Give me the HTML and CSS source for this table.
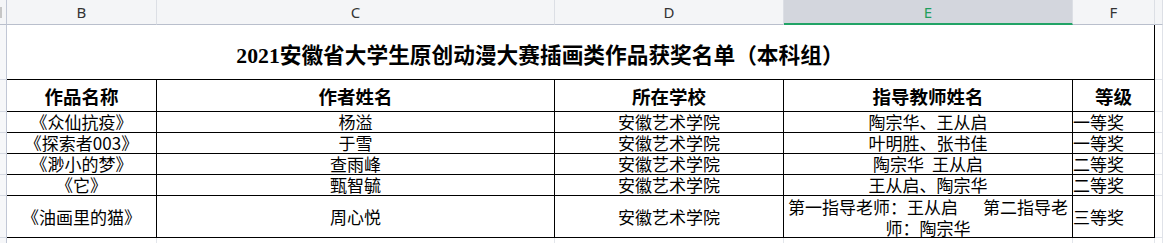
FILE: index.html
```html
<!DOCTYPE html>
<html lang="zh-CN">
<head>
<meta charset="utf-8">
<title>获奖名单</title>
<link rel="stylesheet" href="styles.css">
</head>
<body>
<div class="sheet">
  <div class="colhead corner"><span class="nub"></span></div>
  <div class="colhead">B</div>
  <div class="colhead">C</div>
  <div class="colhead">D</div>
  <div class="colhead active">E</div>
  <div class="colhead">F</div>
  <div class="colhead"></div>

  <div class="rowhead"></div>
  <div class="title">2021安徽省大学生原创动漫大赛插画类作品获奖名单（本科组）</div>
  <div class="title-end"></div>
  <div class="pad"></div>

  <div class="rowhead"></div>
  <div class="cell head">作品名称</div>
  <div class="cell head">作者姓名</div>
  <div class="cell head">所在学校</div>
  <div class="cell head">指导教师姓名</div>
  <div class="cell head">等级</div>
  <div class="pad"></div>

  <div class="rowhead"></div>
  <div class="cell">《众仙抗疫》</div>
  <div class="cell">杨溢</div>
  <div class="cell">安徽艺术学院</div>
  <div class="cell">陶宗华、王从启</div>
  <div class="cell left">一等奖</div>
  <div class="pad"></div>

  <div class="rowhead"></div>
  <div class="cell">《探索者003》</div>
  <div class="cell">于雪</div>
  <div class="cell">安徽艺术学院</div>
  <div class="cell">叶明胜、张书佳</div>
  <div class="cell left">一等奖</div>
  <div class="pad"></div>

  <div class="rowhead"></div>
  <div class="cell">《渺小的梦》</div>
  <div class="cell">查雨峰</div>
  <div class="cell">安徽艺术学院</div>
  <div class="cell">陶宗华<span class="sp"></span>王从启</div>
  <div class="cell left">二等奖</div>
  <div class="pad"></div>

  <div class="rowhead"></div>
  <div class="cell">《它》</div>
  <div class="cell">甄智毓</div>
  <div class="cell">安徽艺术学院</div>
  <div class="cell">王从启、陶宗华</div>
  <div class="cell left">二等奖</div>
  <div class="pad"></div>

  <div class="rowhead"></div>
  <div class="cell">《油画里的猫》</div>
  <div class="cell">周心悦</div>
  <div class="cell">安徽艺术学院</div>
  <div class="cell wrap"><p class="lines">第一指导老师：王从启<span class="gap"></span>第二指导老师：陶宗华</p></div>
  <div class="cell left">三等奖</div>
  <div class="pad"></div>

  <div class="rowhead last"></div>
  <div class="blank"></div>
  <div class="blank"></div>
  <div class="blank"></div>
  <div class="blank"></div>
  <div class="blank"></div>
  <div class="blank"></div>
</div>
</body>
</html>
```

FILE: styles.css
```css
html, body {
  margin: 0;
  padding: 0;
  background: #ffffff;
  overflow: hidden;
}

.sheet {
  display: grid;
  grid-template-columns: 7px 150px 398px 229px 289px 82px 8px;
  grid-template-rows: 25px 55px 32px 21px 21px 21px 21px 42px 5px;
  font-family: "Noto Sans CJK SC", "Noto Sans", sans-serif;
  color: #000;
}

.sheet > div {
  box-sizing: border-box;
  min-width: 0;
}

.colhead {
  background: #f4f5f7;
  border-right: 1px solid #dcdfe5;
  border-bottom: 1px solid #b9bfcc;
  display: flex;
  align-items: center;
  justify-content: center;
  font-family: "Noto Sans", "Open Sans", sans-serif;
  font-size: 15px;
  color: #333;
  position: relative;
}

.colhead.corner {
  border-right: 1px solid #c1c7d5;
}

.colhead.active {
  background: #d3d6dd;
  color: #1f9e5c;
  border-bottom: 2px solid #21a366;
}

.nub {
  position: absolute;
  left: 0;
  top: 7px;
  width: 2px;
  height: 11px;
  background: #c6c6c6;
}

.rowhead {
  background: #f6f7f9;
  border-right: 1px solid #c1c7d5;
  border-bottom: 1px solid #d5d9e2;
}

.rowhead.last {
  border-bottom: none;
}

.title {
  grid-column: 2 / 6;
  border-bottom: 1px solid #000;
  display: flex;
  align-items: center;
  justify-content: center;
  padding-top: 3px;
  font-family: "Liberation Serif", "Noto Sans CJK SC", serif;
  font-weight: bold;
  font-size: 21.7px;
  white-space: nowrap;
}

.title-end {
  border-right: 1px solid #000;
  border-bottom: 1px solid #000;
}

.cell {
  border-right: 1px solid #000;
  border-bottom: 1px solid #000;
  display: flex;
  align-items: center;
  justify-content: center;
  text-align: center;
  font-size: 17px;
  line-height: 20px;
  white-space: nowrap;
}

.cell.head {
  font-weight: bold;
  font-size: 18.5px;
}

.cell.left {
  justify-content: flex-start;
  text-align: left;
}

.cell.wrap {
  white-space: normal;
}

.lines {
  margin: 0;
  line-height: 21px;
  white-space: normal;
}

.sp {
  display: inline-block;
  width: 8px;
}

.gap {
  display: inline-block;
  width: 25px;
}

.pad {
  border-right: 1px solid #dfe2e8;
  border-bottom: 1px solid #dfe2e8;
}

.blank {
  border-right: 1px solid #e3e6eb;
}
```
